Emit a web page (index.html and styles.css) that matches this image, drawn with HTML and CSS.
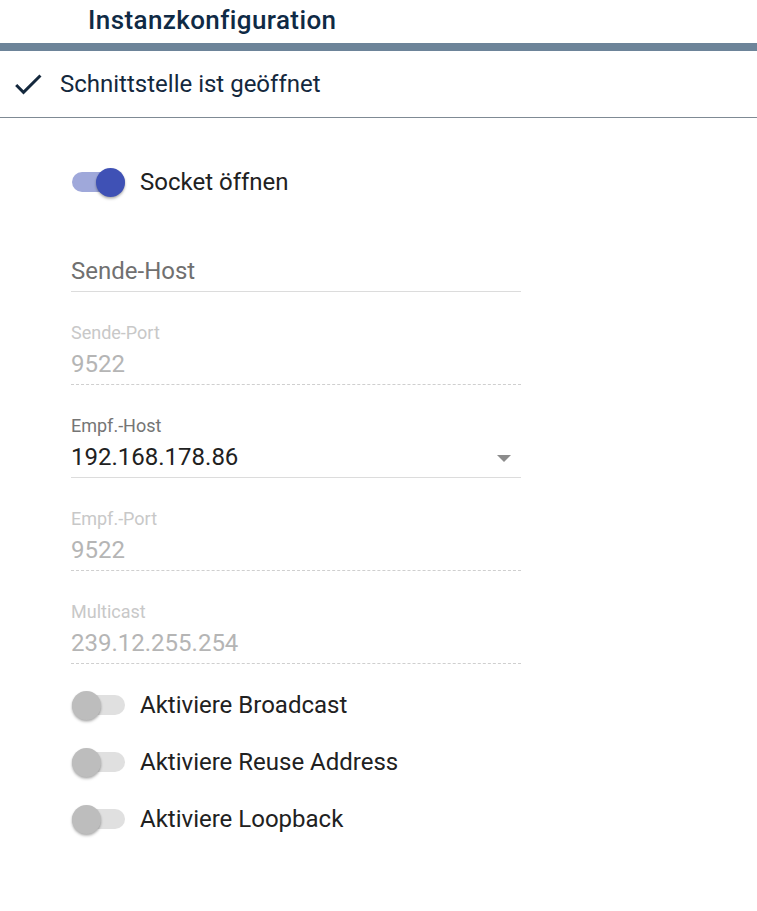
FILE: index.html
```html
<!DOCTYPE html>
<html lang="de">
<head>
<meta charset="utf-8">
<link rel="stylesheet" href="styles.css">
</head>
<body>
<header class="header">
  <h1 class="title">Instanzkonfiguration</h1>
</header>
<div class="bar"></div>
<div class="status">
  <svg class="check" viewBox="0 0 24 24" width="36" height="36"><path d="M9 16.17L4.83 12l-1.42 1.41L9 19 21 7l-1.41-1.41z" fill="#14283d"/></svg>
  <span class="status-text">Schnittstelle ist geöffnet</span>
</div>
<div class="form">
  <div class="switch-row first">
    <span class="switch on"><span class="track"></span><span class="thumb"></span></span>
    <span class="switch-label">Socket öffnen</span>
  </div>

  <div class="field">
    <div class="value placeholder">Sende-Host</div>
  </div>

  <div class="field disabled">
    <div class="label">Sende-Port</div>
    <div class="value">9522</div>
  </div>

  <div class="field select">
    <div class="label">Empf.-Host</div>
    <div class="value">192.168.178.86<span class="arrow"></span></div>
  </div>

  <div class="field disabled">
    <div class="label">Empf.-Port</div>
    <div class="value">9522</div>
  </div>

  <div class="field disabled last">
    <div class="label">Multicast</div>
    <div class="value">239.12.255.254</div>
  </div>

  <div class="switch-row">
    <span class="switch"><span class="track"></span><span class="thumb"></span></span>
    <span class="switch-label">Aktiviere Broadcast</span>
  </div>
  <div class="switch-row">
    <span class="switch"><span class="track"></span><span class="thumb"></span></span>
    <span class="switch-label">Aktiviere Reuse Address</span>
  </div>
  <div class="switch-row">
    <span class="switch"><span class="track"></span><span class="thumb"></span></span>
    <span class="switch-label">Aktiviere Loopback</span>
  </div>
</div>
</body>
</html>
```
FILE: styles.css
```css
* { box-sizing: border-box; }
html, body { margin: 0; padding: 0; background: #fff; }
body { font-family: Roboto, "Liberation Sans", sans-serif; color: #212121; width: 757px; }

.header { height: 43px; padding-left: 88px; padding-bottom: 3px; display: flex; align-items: center; }
.title { margin: 0; font-size: 26px; font-weight: 500; letter-spacing: 0.4px; color: #0f2a45; line-height: 1; }

.bar { height: 8px; background: #6d8499; }

.status { height: 67px; display: flex; align-items: center; border-bottom: 1px solid #7f8a94; }
.check { margin-left: 10px; margin-right: 14px; flex: none; }
.status-text { font-size: 24px; color: #14283d; }

.form { padding-left: 71px; width: 521px; display: flex; flex-direction: column; }

.switch-row { display: flex; align-items: center; height: 57px; }
.switch-row.first { margin-top: 35px; margin-bottom: 45px; }
.switch { position: relative; width: 54px; height: 30px; margin-right: 15px; flex: none; }
.track { position: absolute; left: 1px; top: 5px; width: 53px; height: 20px; border-radius: 10px; background: #e0e0e0; }
.thumb { position: absolute; left: 1px; top: 1px; width: 29px; height: 29px; border-radius: 50%; background: #bdbdbd; box-shadow: 0 2px 3px rgba(0,0,0,0.22), 0 1px 2px rgba(0,0,0,0.14); }
.switch.on .track { background: #9fa8da; }
.switch.on .thumb { left: 25px; background: #3f51b5; }
.switch-label { font-size: 24px; color: #212121; }

.field { border-bottom: 1px solid #dcdcdc; margin-bottom: 29px; }
.field.disabled { border-bottom: 1px dashed #cfcfcf; }
.field.last { margin-bottom: 12px; }
.label { font-size: 18px; line-height: 24px; margin-bottom: 3px; color: #757575; }
.value { font-size: 24px; line-height: 32px; padding-bottom: 4px; color: #212121; position: relative; }
.placeholder { color: #707070; }
.disabled .label { color: #c8c8c8; }
.disabled .value { color: #b5b5b5; }
.arrow { position: absolute; right: 10px; top: 14px; width: 0; height: 0; border-left: 7px solid transparent; border-right: 7px solid transparent; border-top: 7px solid #8c8c8c; }
```
